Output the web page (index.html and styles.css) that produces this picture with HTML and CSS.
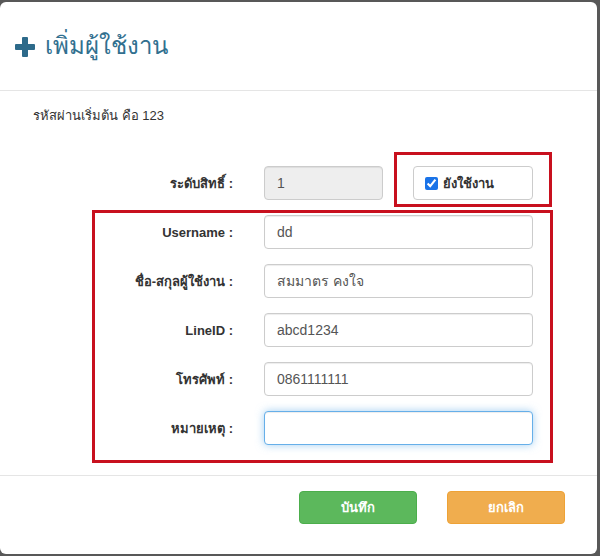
FILE: index.html
```html
<!DOCTYPE html>
<html lang="th">
<head>
<meta charset="utf-8">
<title>เพิ่มผู้ใช้งาน</title>
<link rel="stylesheet" href="styles.css">
</head>
<body>
<div class="modal">
  <div class="modal-header">
    <svg class="plus" width="20" height="20" viewBox="0 0 20 20" aria-hidden="true">
      <rect x="7" y="0" width="6" height="20" rx="1" fill="#2d6a8a"/>
      <rect x="0" y="7" width="20" height="6" rx="1" fill="#2d6a8a"/>
    </svg>
    <h4 class="title">เพิ่มผู้ใช้งาน</h4>
  </div>
  <div class="modal-body">
    <p class="note">รหัสผ่านเริ่มต้น คือ 123</p>
    <div class="row">
      <label class="lbl">ระดับสิทธิ์ :</label>
      <input class="field short" type="text" value="1" disabled>
      <label class="chk-box"><input type="checkbox" checked> ยังใช้งาน</label>
    </div>
    <div class="row">
      <label class="lbl">Username :</label>
      <input class="field" type="text" value="dd">
    </div>
    <div class="row">
      <label class="lbl">ชื่อ-สกุลผู้ใช้งาน :</label>
      <input class="field" type="text" value="สมมาตร คงใจ">
    </div>
    <div class="row">
      <label class="lbl">LineID :</label>
      <input class="field" type="text" value="abcd1234">
    </div>
    <div class="row">
      <label class="lbl">โทรศัพท์ :</label>
      <input class="field" type="text" value="0861111111">
    </div>
    <div class="row">
      <label class="lbl">หมายเหตุ :</label>
      <input class="field focus" type="text" value="">
    </div>
  </div>
  <div class="modal-footer">
    <button class="btn save">บันทึก</button>
    <button class="btn cancel">ยกเลิก</button>
  </div>
  <div class="mark mark-status"></div>
  <div class="mark mark-fields"></div>
</div>
</body>
</html>
```
FILE: styles.css
```css
html, body {
  margin: 0;
  padding: 0;
}
body {
  background: #585858;
  font-family: "Liberation Sans", Arial, sans-serif;
  font-size: 13px;
  color: #333;
  width: 600px;
  height: 556px;
  overflow: hidden;
}
.modal {
  position: relative;
  margin: 2px 3px 0 0;
  height: 552px;
  background: #fff;
  border-radius: 6px;
  box-sizing: border-box;
}
.modal-header {
  height: 88px;
  border-bottom: 1px solid #e5e5e5;
  display: flex;
  align-items: center;
  padding: 0 0 0 15px;
  gap: 10px;
}
.plus {
  display: block;
  margin-top: 2px;
}
.title {
  margin: 0;
  font-size: 24px;
  font-weight: normal;
  color: #31708f;
  line-height: 1.2;
}
.modal-body {
  padding: 15px 0 0 33px;
  height: 384px;
  box-sizing: border-box;
}
.note {
  margin: 0 0 40px 0;
  line-height: 20px;
  font-size: 13px;
}
.row {
  display: flex;
  align-items: center;
  height: 34px;
  margin-bottom: 15px;
}
.lbl {
  width: 200px;
  text-align: right;
  font-weight: bold;
  font-size: 13px;
  margin-right: 31px;
}
.field {
  width: 269px;
  height: 34px;
  box-sizing: border-box;
  border: 1px solid #ccc;
  border-radius: 4px;
  padding: 6px 12px;
  font-family: "Liberation Sans", Arial, sans-serif;
  font-size: 14px;
  color: #555;
  background: #fff;
  box-shadow: inset 0 1px 1px rgba(0,0,0,.075);
  outline: none;
}
.field.short {
  width: 119px;
  background: #eee;
  color: #555;
}
.field.focus {
  border-color: #66afe9;
  box-shadow: inset 0 1px 1px rgba(0,0,0,.075), 0 0 8px rgba(102,175,233,.6);
}
.chk-box {
  margin-left: 30px;
  width: 120px;
  height: 34px;
  box-sizing: border-box;
  border: 1px solid #ccc;
  border-radius: 4px;
  display: flex;
  align-items: center;
  padding-left: 11px;
  font-weight: bold;
  font-size: 13px;
  gap: 2px;
}
.chk-box input {
  margin: 0 3px 0 0;
  width: 13px;
  height: 13px;
  accent-color: #1a73e8;
}
.modal-footer {
  border-top: 1px solid #e5e5e5;
  display: flex;
  justify-content: flex-end;
  padding: 15px 32px 0 0;
  gap: 30px;
}
.btn {
  width: 118px;
  height: 33px;
  border: 1px solid transparent;
  border-radius: 4px;
  color: #fff;
  font-weight: bold;
  font-size: 13px;
  font-family: "Liberation Sans", Arial, sans-serif;
}
.save {
  background: #5cb85c;
  border-color: #4cae4c;
}
.cancel {
  background: #f0ad4e;
  border-color: #eea236;
}
.mark {
  position: absolute;
  border: 3px solid #c8101e;
  box-sizing: border-box;
  pointer-events: none;
}
.mark-status {
  left: 394px;
  top: 150px;
  width: 158px;
  height: 55px;
}
.mark-fields {
  left: 92px;
  top: 208px;
  width: 461px;
  height: 253px;
}
```
